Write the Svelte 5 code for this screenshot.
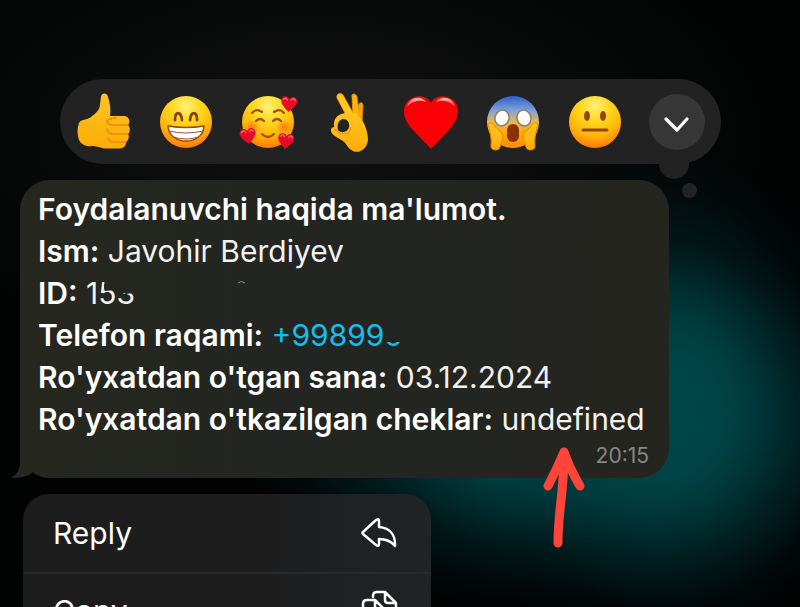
<script lang="ts">
  type Row = { label: string; value?: string; kind?: 'id' | 'phone' };

  const reactions = ['like', 'grin', 'love', 'ok', 'heart', 'scream', 'neutral'];

  const rows: Row[] = [
    { label: "Foydalanuvchi haqida ma'lumot." },
    { label: 'Ism:', value: 'Javohir Berdiyev' },
    { label: 'ID:', value: '153', kind: 'id' },
    { label: 'Telefon raqami:', value: '+998999', kind: 'phone' },
    { label: "Ro'yxatdan o'tgan sana:", value: '03.12.2024' },
    { label: "Ro'yxatdan o'tkazilgan cheklar:", value: 'undefined' },
  ];
</script>

{#snippet smallHeart(x: number, y: number, turn: number)}
  <g transform="translate({x} {y}) rotate({turn})">
    <path d="M0 8C-4 4-8 1-8-3C-8-8-2-9 0-5C2-9 8-8 8-3C8 1 4 4 0 8Z" fill="#e60a22" />
    <path d="M-6-4Q-4-7-2-4M2-4Q4-7 6-4" fill="none" stroke="#f8607a" stroke-width="1.500" stroke-linecap="round" />
  </g>
{/snippet}

<main class="screen">
  <div class="reactions">
    {#each reactions as name}
      <button class="reaction" type="button" aria-label={name}>
        <svg viewBox="0 0 56 56" aria-hidden="true">
          {#if name === 'like'}
            <path d="M25 3C25-1 31-2 32 3C34 9 35 15 34 22H48C53 22 55 28 52 31C55 34 54 38 52 40C54 43 52 47 50 48C50 52 48 54 44 54.500H33C26 55 22 52 16 52C10 53 5 50 3 46C1 41 1 34 3 29C5 25 11 26 15 23C20 19 24 16 24 10Z" fill="url(#hand)" />
            <path d="M52 31H37Q32 31 31 27M52 40H37Q32 40 31 35M50 48H38Q33 48 32 44M31 27Q34 24 40 24" fill="none" stroke="#ee8a00" stroke-width="1.500" stroke-linecap="round" />
          {:else if name === 'grin'}
            <circle cx="28" cy="28" r="26" fill="url(#face)" />
            <path d="M17 26C17 17 23 17 24 26M32 26C33 17 39 17 39 26" fill="none" stroke="#8a3f0a" stroke-width="2.800" stroke-linecap="round" />
            <path d="M10 32Q28 35 46 32C45 52 11 52 10 32Z" fill="#fff" stroke="#9a4a0b" stroke-width="1.500" stroke-linejoin="round" />
            <path d="M11 37Q28 41 45 37M15 43Q28 47 41 43" fill="none" stroke="#8f5a3c" stroke-width="1" />
          {:else if name === 'love'}
            <circle cx="28" cy="28" r="26" fill="url(#face)" />
            <circle cx="12" cy="33" r="8" fill="url(#blush)" />
            <circle cx="44" cy="33" r="8" fill="url(#blush)" />
            <path d="M12 19Q16 14 22 18M34 18Q40 14 44 19M16 27Q20 23 24 27M33 27Q37 23 41 27M22 40Q28 46 34 40" fill="none" stroke="#a2500a" stroke-width="2.200" stroke-linecap="round" />
            {@render smallHeart(49, 10, 5)}
            {@render smallHeart(8, 42, -8)}
            {@render smallHeart(46, 47, 6)}
          {:else if name === 'ok'}
            <path d="M34 24L37 10Q40 7 41 11L40 29Z" fill="#f6a508" stroke="#e98f00" stroke-width="0.800" />
            <path d="M31 24L30 3C29-1 34-1 35 3L38 26Z" fill="#ffb60c" stroke="#ef9500" stroke-width="0.800" />
            <path d="M24 21L15 4C14 0 18-2 21 1L35 26Z" fill="#ffc524" stroke="#ef9800" stroke-width="0.800" />
            <path fill-rule="evenodd" d="M24 19C30 18 36 20 40 26C44 32 46 40 46 46C45 55 37 60 31 57C26 55 25 50 21 47C16 44 8 40 9 36C9 33 11 34 12 33C11 25 15 20 24 19ZM16 36C19 40 26 38 27 33C28 28 25 25 21 25C16 26 15 31 16 36Z" fill="url(#hand)" />
            <path d="M12 35L18 39Q28 42 29 33" fill="none" stroke="#ee9200" stroke-width="1.200" />
          {:else if name === 'heart'}
            <path d="M28 55C26 52 16 43 9 35C3 28 1 23 1 17C1 2 22-3 28 9C34-3 55 2 55 17C55 23 53 28 47 35C40 43 30 52 28 55Z" fill="#fa0005" />
            <path d="M4 13C6 3 18 1 23 8Q12 4 4 13ZM33 8C38 1 50 3 52 13Q44 4 33 8Z" fill="url(#gloss)" />
          {:else if name === 'scream'}
            <circle cx="28" cy="28" r="26" fill="url(#fright)" />
            <ellipse cx="17" cy="24" rx="7" ry="8" fill="#fff" stroke="#8d8064" stroke-width="1.500" transform="rotate(15 17 24)" />
            <ellipse cx="39" cy="24" rx="7" ry="8" fill="#fff" stroke="#8d8064" stroke-width="1.500" transform="rotate(-15 39 24)" />
            <rect x="22" y="30" width="12" height="18" rx="6" fill="#8a3105" />
            <path d="M4 33C1 28 7 27 10 32C12 36 19 38 18 44L15 53Q14 56 11 56Q6 56 6 52C7 45 5 39 4 33Z" fill="url(#hand)" stroke="#e98a00" stroke-width="1" />
            <path d="M52 33C55 28 49 27 46 32C44 36 37 38 38 44L41 53Q42 56 45 56Q50 56 50 52C49 45 51 39 52 33Z" fill="url(#hand)" stroke="#e98a00" stroke-width="1" />
          {:else}
            <circle cx="28" cy="28" r="26" fill="url(#face)" />
            <ellipse cx="20" cy="22" rx="3" ry="5" fill="#94450a" />
            <ellipse cx="36" cy="22" rx="3" ry="5" fill="#94450a" />
            <path d="M16 36H40" stroke="#94450a" stroke-width="3" stroke-linecap="round" />
          {/if}
        </svg>
      </button>
    {/each}
    <button class="reaction more" type="button" aria-label="More reactions">
      <svg viewBox="0 0 56 56" aria-hidden="true">
        <path d="M17 25L28 36L38 25" fill="none" stroke="#fff" stroke-width="3.200" stroke-linecap="round" stroke-linejoin="round" />
      </svg>
    </button>
  </div>

  <article class="message">
    {#each rows as row}
      <p>
        <strong>{row.label}</strong>
        {#if row.kind === 'phone'}
          <a href="tel:+998999">{row.value}<span class="smudge"></span></a>
        {:else if row.kind === 'id'}
          <span class="value">{row.value}<svg class="id-smudge" viewBox="0 0 170 40" aria-hidden="true">
            <path d="M19 4H60V21L47 20L40 21L33 18L30 17L19 18L18 13Z" />
            <path class="fleck" d="M152 10Q155 7 159 10" />
          </svg></span>
        {:else if row.value}
          <span class="value">{row.value}</span>
        {/if}
      </p>
    {/each}
    <time>20:15</time>
    <svg class="tail" viewBox="0 0 36 28" aria-hidden="true">
      <path d="M9 0V12C9 20 5 25 0 28C8 28 16 27 21 23V0Z" />
    </svg>
    <svg class="arrow" viewBox="0 0 40 104" aria-hidden="true">
      <path d="M4 39Q13 22 20 5Q26 22 36 39M20 8C20 44 14 64 14 96" />
    </svg>
  </article>

  <nav class="menu">
    <button type="button">
      Reply
      <svg viewBox="0 0 36 36" aria-hidden="true">
        <path d="M1 17L14 5Q17 3 17 6V12C28 13 33 20 33 29V31C29 26 24 24 17 24V29Q17 32 14 30L1 19Q0 18 1 17Z" />
      </svg>
    </button>
    <button type="button">
      Copy
      <svg viewBox="0 0 36 36" aria-hidden="true">
        <path d="M11 4V3Q11-1 15-1H23L34 10V24Q34 28 30 28H24M23-1V7Q23 10 26 10H34" />
        <path d="M1 32V11Q1 7 5 7H13L24 18V32Q24 36 20 36H5Q1 36 1 32ZM13 7V14Q13 18 17 18H24" />
      </svg>
    </button>
  </nav>

  <svg class="defs" aria-hidden="true">
    <defs>
      <radialGradient id="face" cx="0.5" cy="0.2" r="0.8">
        <stop offset="0" stop-color="#fff07a" />
        <stop offset="0.35" stop-color="#ffd91f" />
        <stop offset="0.7" stop-color="#ffb608" />
        <stop offset="1" stop-color="#ff7a08" />
      </radialGradient>
      <radialGradient id="blush">
        <stop offset="0" stop-color="#ff5a1f" stop-opacity="0.7" />
        <stop offset="1" stop-color="#ff6a1f" stop-opacity="0" />
      </radialGradient>
      <linearGradient id="hand" x1="0" y1="0" x2="0" y2="1">
        <stop offset="0" stop-color="#ffc422" />
        <stop offset="1" stop-color="#ffac08" />
      </linearGradient>
      <linearGradient id="gloss" x1="0" y1="0" x2="0" y2="1">
        <stop offset="0" stop-color="#ffb9b9" />
        <stop offset="1" stop-color="#fb2a2e" />
      </linearGradient>
      <linearGradient id="fright" x1="0" y1="0" x2="0" y2="1">
        <stop offset="0" stop-color="#2c5fce" />
        <stop offset="0.28" stop-color="#7fa3d8" />
        <stop offset="0.5" stop-color="#e6b84d" />
        <stop offset="0.7" stop-color="#ffab0a" />
        <stop offset="1" stop-color="#ff8a08" />
      </linearGradient>
    </defs>
  </svg>
</main>

<style>
  :global(body) {
    margin: 0;
    background: #000;
  }
  .screen {
    box-sizing: border-box;
    height: 100vh;
    overflow: hidden;
    padding: 79px 20px 0;
    background:
      radial-gradient(ellipse 24% 42% at 84% 66%, rgba(0, 72, 76, 0.9) 0%, rgba(0, 68, 72, 0.8) 30%, rgba(0, 50, 52, 0.4) 62%, rgba(0, 30, 32, 0.15) 85%, transparent 100%),
      radial-gradient(ellipse 44% 32% at 72% 70%, #00464a 0%, #003e41 35%, rgba(0, 38, 40, 0.6) 65%, rgba(0, 20, 22, 0.2) 88%, transparent 100%),
      radial-gradient(ellipse 60% 40% at 40% 22%, #111211, transparent),
      #010202;
    color: #fff;
    font-family: Inter, "Liberation Sans", sans-serif;
    font-size: 30px;
    line-height: 42px;
  }
  button {
    border: 0;
    padding: 0;
    background: none;
    color: inherit;
    font: inherit;
    cursor: pointer;
  }
  .reactions {
    position: relative;
    box-sizing: border-box;
    display: flex;
    align-items: center;
    justify-content: space-between;
    max-width: 661px;
    height: 85px;
    margin-left: 40px;
    padding: 0 16px;
    border-radius: 43px;
    background: #222;
  }
  .reactions::before,
  .reactions::after {
    content: '';
    position: absolute;
    border-radius: 50%;
    background: #222;
  }
  .reactions::before {
    right: 32px;
    bottom: -15px;
    width: 30px;
    height: 30px;
  }
  .reactions::after {
    right: 24px;
    bottom: -34px;
    width: 15px;
    height: 15px;
  }
  .reaction {
    width: 56px;
    height: 56px;
    border-radius: 50%;
  }
  .reaction svg {
    display: block;
    overflow: visible;
  }
  .reaction.more {
    position: relative;
    z-index: 1;
    background: #363637;
  }
  .message {
    position: relative;
    box-sizing: border-box;
    max-width: 649px;
    margin-top: 16px;
    padding: 8px 16px 10px 18px;
    border-radius: 30px;
    background: linear-gradient(90deg, #26281f, #222521 40%, #252520);
  }
  .message p {
    margin: 0;
  }
  .message strong {
    font-weight: 640;
  }
  .message a {
    position: relative;
    color: #16bdf0;
    text-decoration: none;
  }
  .value {
    position: relative;
    color: #f2f2f0;
  }
  .smudge {
    position: absolute;
    top: 4px;
    right: -2px;
    width: 20px;
    height: 21px;
    background: #222521;
  }
  .id-smudge {
    position: absolute;
    top: -2px;
    left: 0;
    width: 170px;
    height: 40px;
    fill: #242620;
  }
  .fleck {
    fill: none;
    stroke: #8d8f8b;
  }
  time {
    display: block;
    margin-top: 4px;
    padding-right: 4px;
    color: #858782;
    font-size: 21px;
    line-height: 24px;
    text-align: right;
  }
  .tail {
    position: absolute;
    bottom: 0;
    left: -9px;
    width: 36px;
    height: 28px;
    fill: #26281f;
  }
  .arrow {
    position: absolute;
    right: 85px;
    bottom: -73px;
    width: 40px;
    height: 104px;
    overflow: visible;
    fill: none;
    stroke: #ff453a;
    stroke-width: 9px;
    stroke-linecap: round;
    stroke-linejoin: round;
  }
  .menu {
    max-width: 408px;
    margin: 16px 0 0 3px;
    border-radius: 26px;
    overflow: hidden;
    background: linear-gradient(90deg, #1d1d1e 60%, #202425);
  }
  .menu button {
    display: flex;
    align-items: center;
    justify-content: space-between;
    width: 100%;
    height: 78px;
    padding: 0 33px 0 30px;
  }
  .menu button + button {
    box-shadow: inset 0 2px #28292a;
  }
  .menu svg {
    width: 36px;
    height: 36px;
    overflow: visible;
    fill: none;
    stroke: #fff;
    stroke-width: 2.500;
    stroke-linejoin: round;
    stroke-linecap: round;
  }
  .defs {
    position: absolute;
    width: 0;
    height: 0;
  }
</style>
